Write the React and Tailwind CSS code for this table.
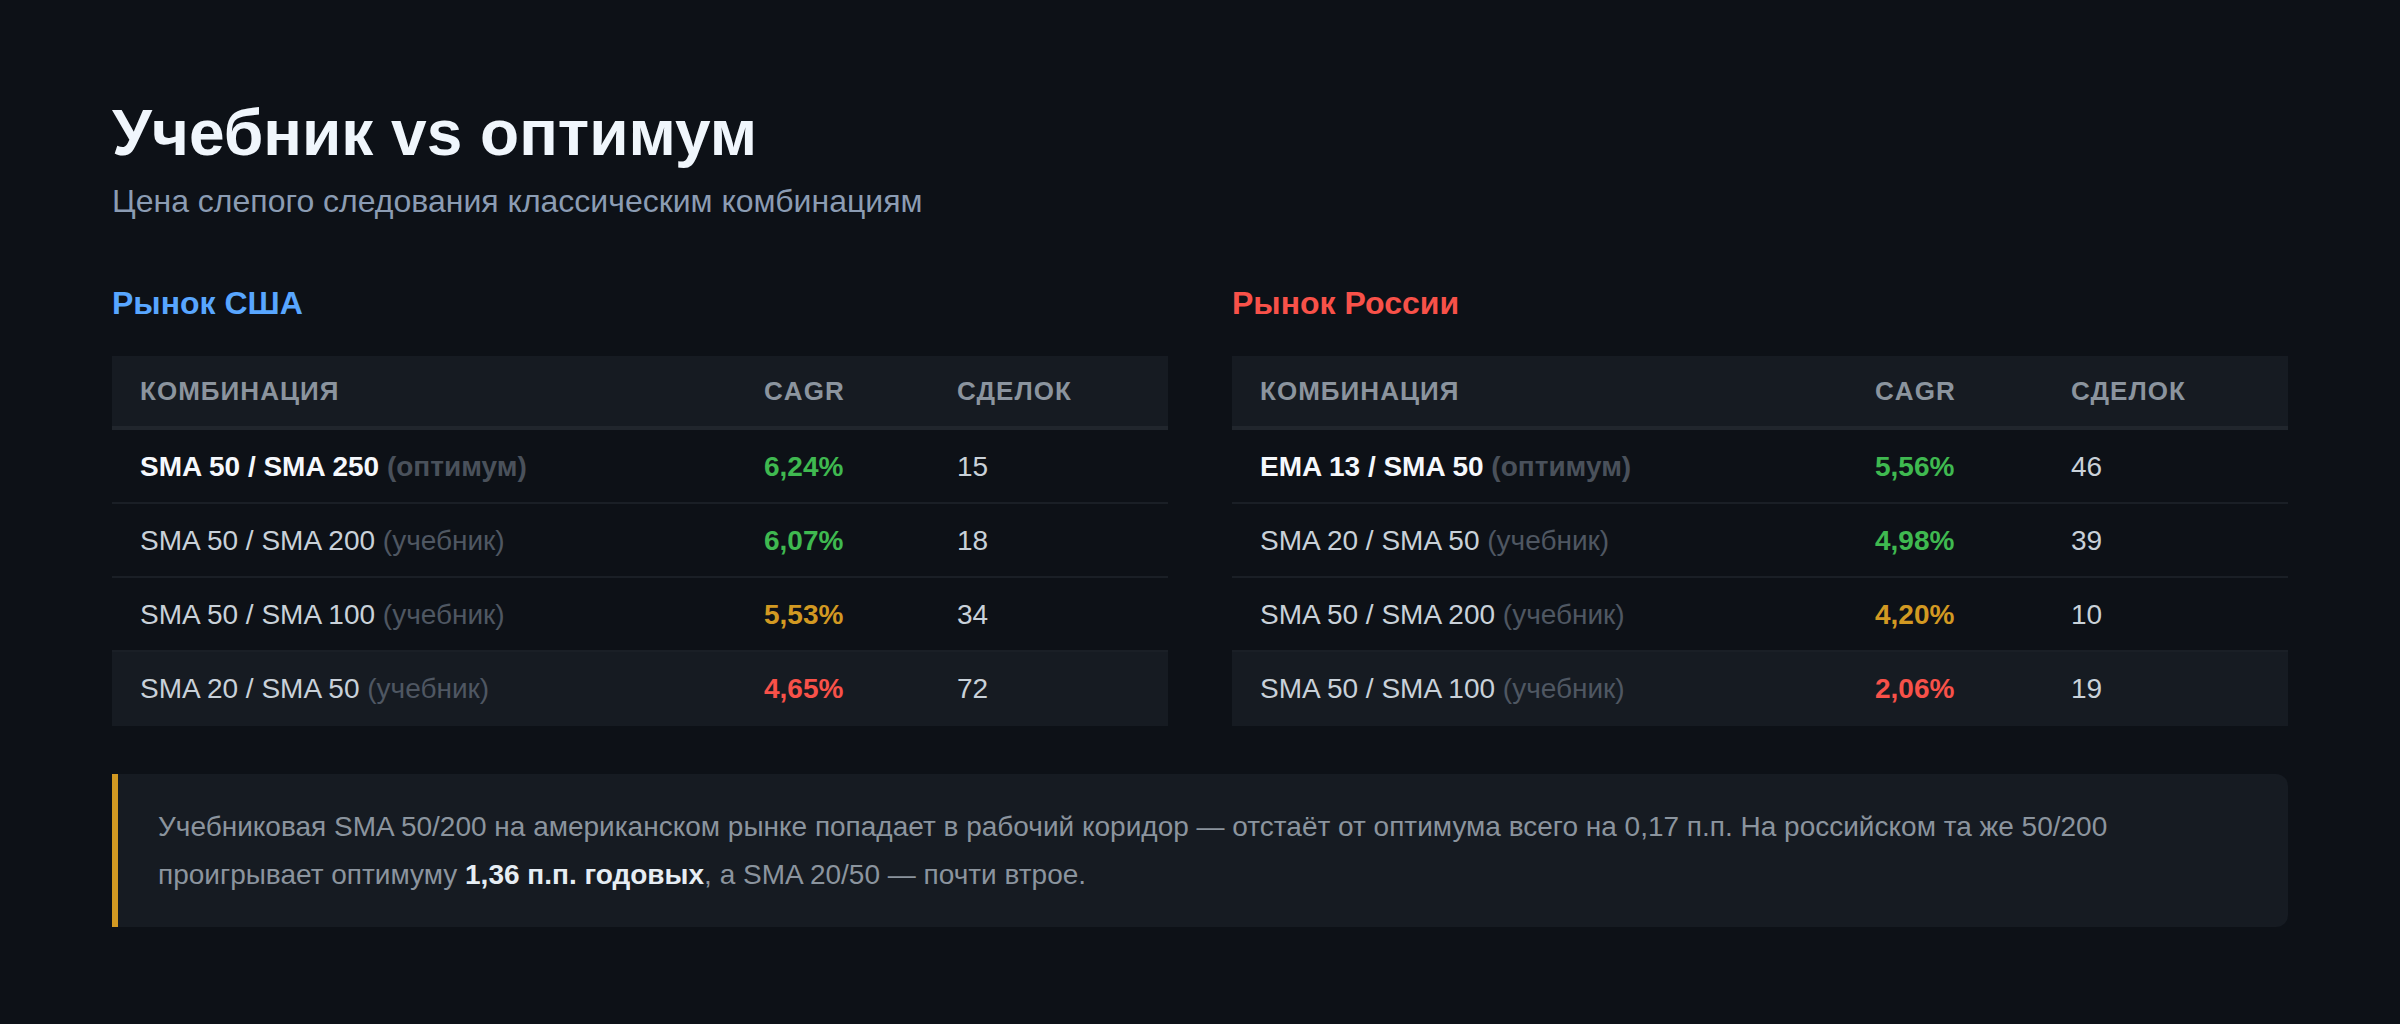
import React from "react";

const us = [
  { name: "SMA 50 / SMA 250", tag: "(оптимум)", best: true, cagr: "6,24%", c: "text-[#3fb950]", n: "15" },
  { name: "SMA 50 / SMA 200", tag: "(учебник)", cagr: "6,07%", c: "text-[#3fb950]", n: "18" },
  { name: "SMA 50 / SMA 100", tag: "(учебник)", cagr: "5,53%", c: "text-[#d29922]", n: "34" },
  { name: "SMA 20 / SMA 50", tag: "(учебник)", cagr: "4,65%", c: "text-[#f85149]", n: "72", hl: true },
];
const ru = [
  { name: "EMA 13 / SMA 50", tag: "(оптимум)", best: true, cagr: "5,56%", c: "text-[#3fb950]", n: "46" },
  { name: "SMA 20 / SMA 50", tag: "(учебник)", cagr: "4,98%", c: "text-[#3fb950]", n: "39" },
  { name: "SMA 50 / SMA 200", tag: "(учебник)", cagr: "4,20%", c: "text-[#d29922]", n: "10" },
  { name: "SMA 50 / SMA 100", tag: "(учебник)", cagr: "2,06%", c: "text-[#f85149]", n: "19", hl: true },
];

function Market({ title, titleColor, rows, w }) {
  return (
    <div className="flex flex-col">
      <h2 className={`text-[32px] font-bold leading-[48px] ${titleColor}`}>{title}</h2>
      <table className="mt-[29px] w-full table-fixed border-collapse">
        <colgroup>
          <col className={w[0]} />
          <col className={w[1]} />
          <col />
        </colgroup>
        <thead>
          <tr className="bg-[#161b22] border-b-4 border-[#21262d]">
            {["Комбинация", "CAGR", "Сделок"].map((h) => (
              <th
                key={h}
                className="px-[28px] py-[15px] text-left text-[26px] leading-[40px] font-bold uppercase tracking-[0.04em] text-[#8b949e]"
              >
                {h}
              </th>
            ))}
          </tr>
        </thead>
        <tbody>
          {rows.map((r, i) => (
            <tr
              key={i}
              className={
                r.hl
                  ? "bg-[#161b22] border-b-2 border-[#161b22]"
                  : "border-b-2 border-[#1a1f26]"
              }
            >
              <td className="px-[28px] pt-[16px] pb-[14px] text-[28px] leading-[42px] whitespace-nowrap">
                <span className={r.best ? "font-bold text-[#f5f8fc]" : "text-[#c9d1d9]"}>{r.name}</span>{" "}
                <span className={r.best ? "font-bold text-[#4a515b]" : "text-[#4f5762]"}>{r.tag}</span>
              </td>
              <td className={`px-[28px] pt-[16px] pb-[14px] text-[28px] leading-[42px] font-bold ${r.c}`}>{r.cagr}</td>
              <td className="px-[28px] pt-[16px] pb-[14px] text-[28px] leading-[42px] text-[#c9d1d9]">{r.n}</td>
            </tr>
          ))}
        </tbody>
      </table>
    </div>
  );
}

export default function App() {
  return (
    <div
      className="min-h-[1024px] w-full bg-[#0d1117] px-[112px] pt-[95px] pb-[96px]"
      style={{ fontFamily: '"Liberation Sans", Arial, sans-serif' }}
    >
      <h1 className="text-[64px] font-bold leading-[77px] text-[#f0f6fc]">Учебник vs оптимум</h1>
      <p className="mt-[5px] text-[32px] leading-[48px] text-[#8b9cb3]">
        Цена слепого следования классическим комбинациям
      </p>
      <div className="mt-[54px] grid grid-cols-2 gap-[64px]">
        <Market title="Рынок США" titleColor="text-[#58a6ff]" rows={us} w={["w-[624px]", "w-[193px]"]} />
        <Market title="Рынок России" titleColor="text-[#f85149]" rows={ru} w={["w-[615px]", "w-[196px]"]} />
      </div>
      <div className="mt-[48px] rounded-r-[12px] border-l-[6px] border-[#d29922] bg-[#161b22] py-[29px] pl-[40px] pr-[40px]">
        <p className="text-[28px] leading-[1.7] text-[#8b949e]">
          Учебниковая SMA 50/200 на американском рынке попадает в рабочий коридор — отстаёт от оптимума всего на 0,17 п.п. На российском та же 50/200 проигрывает оптимуму{" "}
          <b className="font-bold text-[#e6edf3]">1,36 п.п. годовых</b>, а SMA 20/50 — почти втрое.
        </p>
      </div>
    </div>
  );
}
